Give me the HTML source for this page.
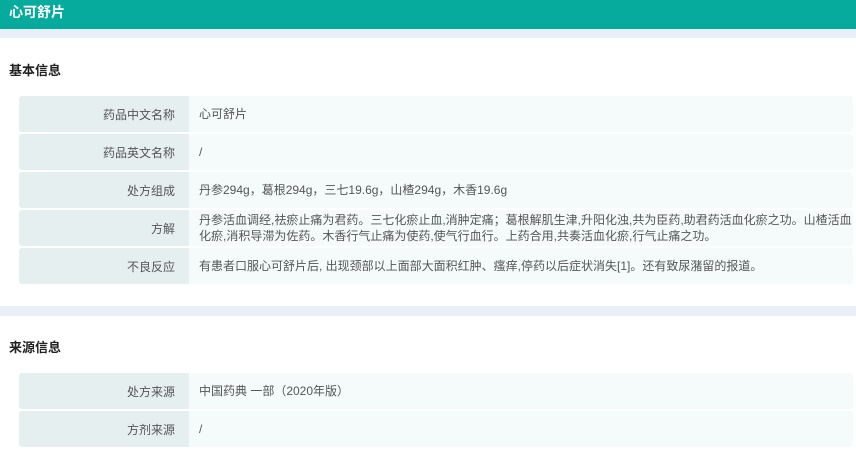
<!DOCTYPE html>
<html><head><meta charset="utf-8"><style>
*{margin:0;padding:0;box-sizing:border-box}
body{width:856px;height:452px;overflow:hidden;background:#fff;font-family:"Liberation Sans","Noto Sans CJK SC",sans-serif;color:#555;font-size:12px}
.hd{height:29px;background:#07ab9e;color:#fff;font-weight:bold;font-size:14px;line-height:24px;padding-left:9px}
.band{height:9px;background:#e9eff6}
.t{font-weight:bold;font-size:13px;color:#222;position:absolute;left:9px}
.row{position:absolute;left:19px;width:834px;height:36px;display:flex;border-radius:3px;overflow:hidden}
.l{width:170px;background:#e6eff0;text-align:right;padding-right:14px;display:flex;align-items:center;justify-content:flex-end}
.v{flex:1;background:#f5fbfb;padding-left:10px;display:flex;align-items:center;white-space:nowrap;line-height:16px}
</style></head><body>
<div class="hd">心可舒片</div>
<div class="band"></div>
<div class="t" style="top:60px">基本信息</div>
<div class="row" style="top:96px"><div class="l">药品中文名称</div><div class="v">心可舒片</div></div>
<div class="row" style="top:134px"><div class="l">药品英文名称</div><div class="v">/</div></div>
<div class="row" style="top:172px"><div class="l">处方组成</div><div class="v">丹参294g，葛根294g，三七19.6g，山楂294g，木香19.6g</div></div>
<div class="row" style="top:210px"><div class="l">方解</div><div class="v">丹参活血调经,祛瘀止痛为君药。三七化瘀止血,消肿定痛；葛根解肌生津,升阳化浊,共为臣药,助君药活血化瘀之功。山楂活血<br>化瘀,消积导滞为佐药。木香行气止痛为使药,使气行血行。上药合用,共奏活血化瘀,行气止痛之功。</div></div>
<div class="row" style="top:248px"><div class="l">不良反应</div><div class="v">有患者口服心可舒片后, 出现颈部以上面部大面积红肿、瘙痒,停药以后症状消失[1]。还有致尿潴留的报道。</div></div>
<div class="band" style="position:absolute;top:306px;width:856px;height:10px"></div>
<div class="t" style="top:337px">来源信息</div>
<div class="row" style="top:373px"><div class="l">处方来源</div><div class="v">中国药典 一部（2020年版）</div></div>
<div class="row" style="top:411px"><div class="l">方剂来源</div><div class="v">/</div></div>
</body></html>
